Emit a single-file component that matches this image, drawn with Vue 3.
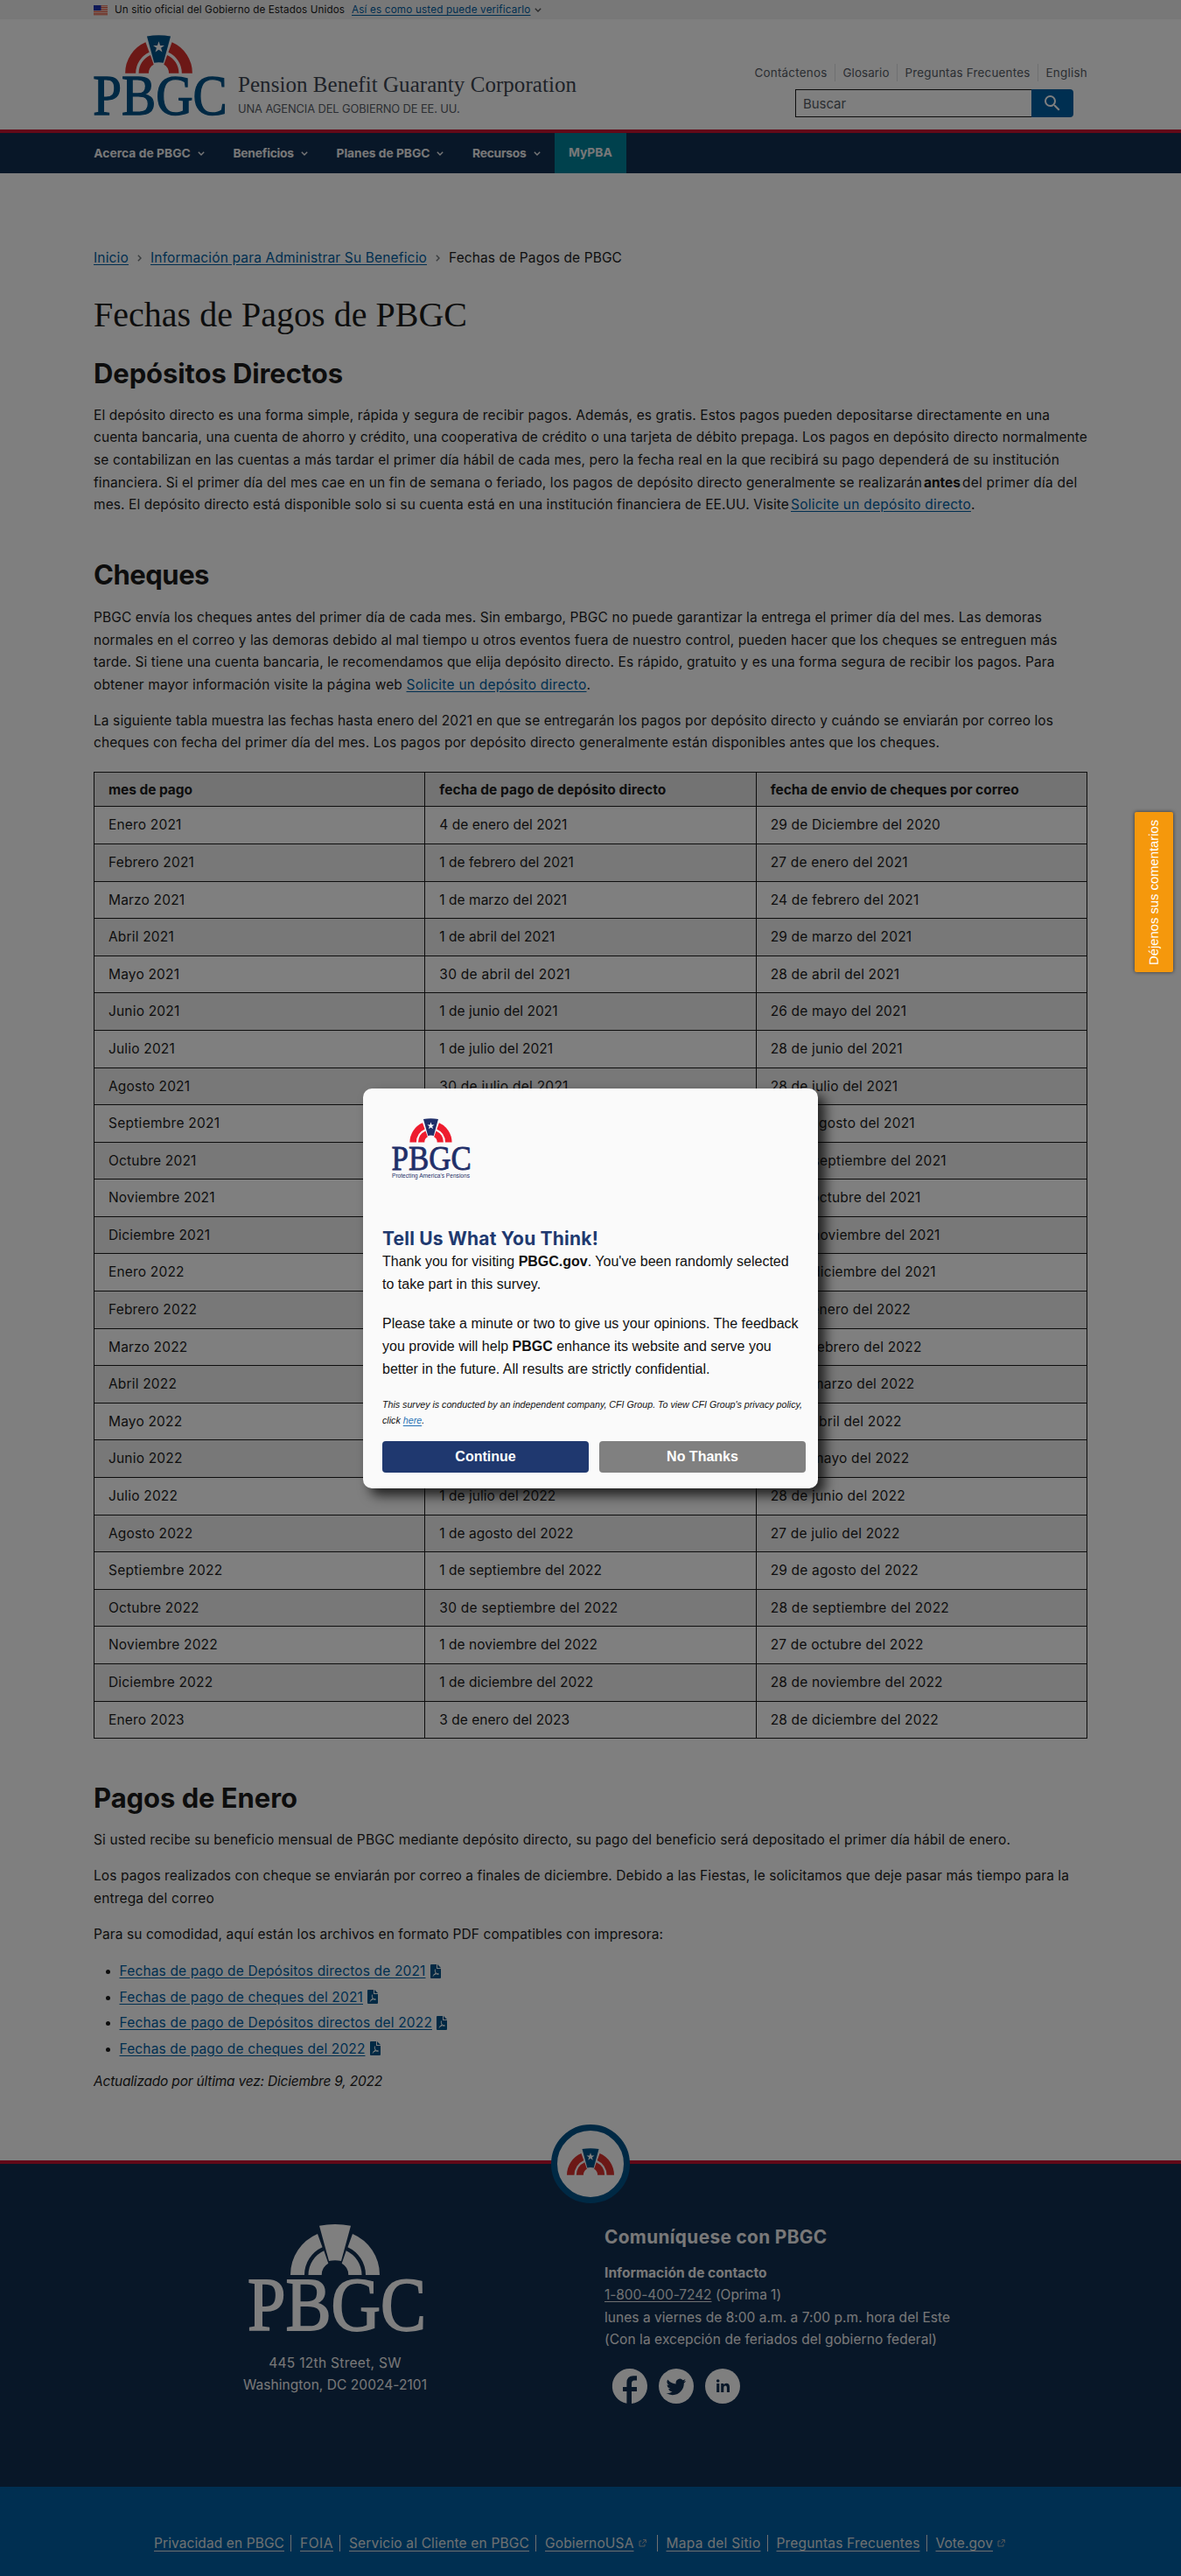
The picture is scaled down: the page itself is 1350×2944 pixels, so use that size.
<script setup>
// Tunes the tracking of a line of text so that it fills the given width.
const vFit = {
  mounted(el, { value }) {
    if (!value) return
    const natural = el.getBoundingClientRect().width
    const count = el.textContent.length
    el.style.letterSpacing = (value - natural) / count + 'px'
  }
}

const navItems = [
  ['Acerca de PBGC', 110.5],
  ['Beneficios', 69.5],
  ['Planes de PBGC', 107],
  ['Recursos', 61.5]
]

const topLinks = [
  ['Contáctenos', 83],
  ['Glosario', 53],
  ['Preguntas Frecuentes', 143],
  ['English', 47.5]
]

const rows = [
  ['Enero 2021', '4 de enero del 2021', '29 de Diciembre del 2020'],
  ['Febrero 2021', '1 de febrero del 2021', '27 de enero del 2021'],
  ['Marzo 2021', '1 de marzo del 2021', '24 de febrero del 2021'],
  ['Abril 2021', '1 de abril del 2021', '29 de marzo del 2021'],
  ['Mayo 2021', '30 de abril del 2021', '28 de abril del 2021'],
  ['Junio 2021', '1 de junio del 2021', '26 de mayo del 2021'],
  ['Julio 2021', '1 de julio del 2021', '28 de junio del 2021'],
  ['Agosto 2021', '30 de julio del 2021', '28 de julio del 2021'],
  ['Septiembre 2021', '1 de septiembre del 2021', '27 de agosto del 2021'],
  ['Octubre 2021', '1 de octubre del 2021', '28 de septiembre del 2021'],
  ['Noviembre 2021', '1 de noviembre del 2021', '27 de octubre del 2021'],
  ['Diciembre 2021', '1 de diciembre del 2021', '26 de noviembre del 2021'],
  ['Enero 2022', '3 de enero del 2022', '29 de diciembre del 2021'],
  ['Febrero 2022', '1 de febrero del 2022', '27 de enero del 2022'],
  ['Marzo 2022', '1 de marzo del 2022', '24 de febrero del 2022'],
  ['Abril 2022', '1 de abril del 2022', '29 de marzo del 2022'],
  ['Mayo 2022', '29 de abril del 2022', '27 de abril del 2022'],
  ['Junio 2022', '1 de junio del 2022', '26 de mayo del 2022'],
  ['Julio 2022', '1 de julio del 2022', '28 de junio del 2022'],
  ['Agosto 2022', '1 de agosto del 2022', '27 de julio del 2022'],
  ['Septiembre 2022', '1 de septiembre del 2022', '29 de agosto del 2022'],
  ['Octubre 2022', '30 de septiembre del 2022', '28 de septiembre del 2022'],
  ['Noviembre 2022', '1 de noviembre del 2022', '27 de octubre del 2022'],
  ['Diciembre 2022', '1 de diciembre del 2022', '28 de noviembre del 2022'],
  ['Enero 2023', '3 de enero del 2023', '28 de diciembre del 2022']
]

const isWide = (text) => /^(septiembre|30|28 de septiembre)/i.test(text)

const files = [
  ['Fechas de pago de Depósitos directos de 2021', 350],
  ['Fechas de pago de cheques del 2021', 278.5],
  ['Fechas de pago de Depósitos directos del 2022', 357.5],
  ['Fechas de pago de cheques del 2022', 281]
]

const legal = [
  ['Privacidad en PBGC', 149, false],
  ['FOIA', 38, false],
  ['Servicio al Cliente en PBGC', 206, false],
  ['GobiernoUSA', 101.5, true],
  ['Mapa del Sitio', 108, false],
  ['Preguntas Frecuentes', 164, false],
  ['Vote.gov', 65.5, true]
]
</script>

<template>
  <div class="page">
    <svg class="defs" width="0" height="0" aria-hidden="true">
      <symbol id="arch" viewBox="48 0 102 58">
        <g id="arch-shape">
          <g fill="var(--arch)">
            <path d="M48 58A51 51 0 0 1 79 11L84.5 26.2A35 35 0 0 0 64 58ZM68.5 58A30.5 30.5 0 0 1 86.3 30.3L91.3 44.8A15.3 15.3 0 0 0 83.7 58Z" />
            <path transform="translate(198 0) scale(-1 1)" d="M48 58A51 51 0 0 1 79 11L84.5 26.2A35 35 0 0 0 64 58ZM68.5 58A30.5 30.5 0 0 1 86.3 30.3L91.3 44.8A15.3 15.3 0 0 0 83.7 58Z" />
          </g>
          <path fill="var(--key)" d="M81 1.8Q99-1.6 117 1.8L106 42Q99 40.5 92 42Z" />
          <path fill="var(--star)" d="M99 9.5L101.1 15.7H107.6L102.4 19.6L104.3 25.9L99 22.1L93.7 25.9L95.6 19.6L90.4 15.7H96.9Z" />
        </g>
      </symbol>
      <symbol id="logo" viewBox="0 0 198 122" overflow="visible">
        <use href="#arch-shape" />
        <text x="-1" y="121" font-family="'Liberation Serif', serif" font-size="86" textLength="204" lengthAdjust="spacingAndGlyphs" fill="var(--word)" stroke="var(--word)" stroke-width="1.8">PBGC</text>
      </symbol>
      <symbol id="chevron" viewBox="0 0 8 5">
        <path d="M.8.8L4 4L7.2.8" fill="none" stroke="currentColor" stroke-width="1.4" />
      </symbol>
      <symbol id="pdf" viewBox="0 0 12 16">
        <path fill="currentColor" d="M0 1Q0 0 1 0H7V5H12V15Q12 16 11 16H1Q0 16 0 15ZM8 0L12 4H8Z" />
        <path fill="none" stroke="#fff" stroke-width="1" d="M5.4 5.6Q5 8 6 9.6Q7.2 11.6 9.6 11.2M6 9.6Q4.6 12.6 2.8 13.4M3.6 11.8Q6 10.4 9.4 10.8" />
      </symbol>
      <symbol id="external" viewBox="0 0 9 9">
        <path fill="none" stroke="currentColor" stroke-width="1" d="M3.5 2H1V8H7V5.5M5 .6H8.4V4M8.2.8L4.2 4.8" />
      </symbol>
    </svg>

    <div class="banner wrap">
      <svg class="flag" width="16" height="11" viewBox="0 0 16 11">
        <rect width="16" height="11" fill="#fff" />
        <path d="M0 .8H16M0 2.5H16M0 4.2H16M0 5.9H16M0 7.6H16M0 9.3H16M0 10.8H16" stroke="#db3e1f" stroke-width=".9" />
        <rect width="8.5" height="6" fill="#1e33b1" />
      </svg>
      <span v-fit="263">Un sitio oficial del Gobierno de Estados Unidos</span>
      <a v-fit="204.5" class="how">Así es como usted puede verificarlo</a>
      <svg class="how-arrow" width="8" height="5"><use href="#chevron" /></svg>
    </div>

    <header class="wrap head">
      <svg class="logo" width="149" height="92"><use href="#logo" /></svg>
      <div class="brand">
        <div class="brand-name"><span v-fit="387">Pension Benefit Guaranty Corporation</span></div>
        <div class="brand-sub"><span v-fit="253.5">UNA AGENCIA DEL GOBIERNO DE EE. UU.</span></div>
      </div>
      <div class="tools">
        <div class="top-links">
          <a v-for="l in topLinks" :key="l[0]"><span v-fit="l[1]">{{ l[0] }}</span></a>
        </div>
        <div class="search">
          <div class="field"><span v-fit="49">Buscar</span></div>
          <div class="go">
            <svg width="24" height="24" viewBox="0 0 24 24"><path fill="#fff" d="M15.5 14h-.79l-.28-.27A6.47 6.47 0 0 0 16 9.5 6.5 6.5 0 1 0 9.5 16c1.61 0 3.09-.59 4.23-1.57l.27.28v.79l5 4.99L20.49 19l-4.99-5zm-6 0C7.01 14 5 11.99 5 9.5S7.01 5 9.5 5 14 7.01 14 9.5 11.99 14 9.5 14z" /></svg>
          </div>
        </div>
      </div>
    </header>

    <nav class="nav">
      <div class="nav-row">
        <a v-for="n in navItems" :key="n[0]" class="nav-item">
          <span v-fit="n[1]">{{ n[0] }}</span>
          <svg width="8" height="5"><use href="#chevron" /></svg>
        </a>
        <a class="mypba"><span v-fit="50">MyPBA</span></a>
      </div>
    </nav>

    <main class="wrap main">
      <div class="crumbs">
        <a v-fit="40">Inicio</a>
        <svg width="5" height="8" viewBox="0 0 5 8"><path d="M.8.8L4 4L.8 7.2" fill="none" stroke="#71767a" stroke-width="1.4" /></svg>
        <a v-fit="316">Información para Administrar Su Beneficio</a>
        <svg width="5" height="8" viewBox="0 0 5 8"><path d="M.8.8L4 4L.8 7.2" fill="none" stroke="#71767a" stroke-width="1.4" /></svg>
        <span v-fit="198">Fechas de Pagos de PBGC</span>
      </div>

      <h1><span v-fit="427">Fechas de Pagos de PBGC</span></h1>

      <h2><span v-fit="285">Depósitos Directos</span></h2>
      <div class="para">
        <div><span v-fit="1093">El depósito directo es una forma simple, rápida y segura de recibir pagos. Además, es gratis. Estos pagos pueden depositarse directamente en una</span></div>
        <div><span v-fit="1136">cuenta bancaria, una cuenta de ahorro y crédito, una cooperativa de crédito o una tarjeta de débito prepaga. Los pagos en depósito directo normalmente</span></div>
        <div><span v-fit="1104">se contabilizan en las cuentas a más tardar el primer día hábil de cada mes, pero la fecha real en la que recibirá su pago dependerá de su institución</span></div>
        <div><span v-fit="947">financiera. Si el primer día del mes cae en un fin de semana o feriado, los pagos de depósito directo generalmente se realizarán</span><b v-fit="42" class="tight">antes</b><span v-fit="131.5" class="tight">del primer día del</span></div>
        <div><span v-fit="795">mes. El depósito directo está disponible solo si su cuenta está en una institución financiera de EE.UU. Visite</span><a v-fit="206" class="tight">Solicite un depósito directo</a>.</div>
      </div>

      <h2 class="cheques"><span v-fit="132">Cheques</span></h2>
      <div class="para after">
        <div><span v-fit="1084">PBGC envía los cheques antes del primer día de cada mes. Sin embargo, PBGC no puede garantizar la entrega el primer día del mes. Las demoras</span></div>
        <div><span v-fit="1101.5">normales en el correo y las demoras debido al mal tiempo u otros eventos fuera de nuestro control, pueden hacer que los cheques se entreguen más</span></div>
        <div><span v-fit="1098.5">tarde. Si tiene una cuenta bancaria, le recomendamos que elija depósito directo. Es rápido, gratuito y es una forma segura de recibir los pagos. Para</span></div>
        <div><span v-fit="353">obtener mayor información visite la página web</span><a v-fit="206" class="word">Solicite un depósito directo</a>.</div>
      </div>
      <div class="para next">
        <div><span v-fit="1097">La siguiente tabla muestra las fechas hasta enero del 2021 en que se entregarán los pagos por depósito directo y cuándo se enviarán por correo los</span></div>
        <div><span v-fit="967">cheques con fecha del primer día del mes. Los pagos por depósito directo generalmente están disponibles antes que los cheques.</span></div>
      </div>

      <table>
        <thead>
          <tr>
            <th><span v-fit="96">mes de pago</span></th>
            <th><span v-fit="259">fecha de pago de depósito directo</span></th>
            <th><span v-fit="284">fecha de envio de cheques por correo</span></th>
          </tr>
        </thead>
        <tbody>
          <tr v-for="r in rows" :key="r[0]">
            <td v-for="c in r" :key="c" :class="{ wide: isWide(c) }">{{ c }}</td>
          </tr>
        </tbody>
      </table>

      <h2 class="enero"><span v-fit="233">Pagos de Enero</span></h2>
      <div class="para after">
        <div><span v-fit="1048">Si usted recibe su beneficio mensual de PBGC mediante depósito directo, su pago del beneficio será depositado el primer día hábil de enero.</span></div>
      </div>
      <div class="para next">
        <div><span v-fit="1115">Los pagos realizados con cheque se enviarán por correo a finales de diciembre. Debido a las Fiestas, le solicitamos que deje pasar más tiempo para la</span></div>
        <div><span v-fit="138">entrega del correo</span></div>
      </div>
      <div class="para next">
        <div><span v-fit="651">Para su comodidad, aquí están los archivos en formato PDF compatibles con impresora:</span></div>
      </div>
      <ul>
        <li v-for="f in files" :key="f[0]">
          <a v-fit="f[1]">{{ f[0] }}</a>
          <svg width="12" height="16"><use href="#pdf" /></svg>
        </li>
      </ul>
      <div class="updated"><i v-fit="330">Actualizado por última vez: Diciembre 9, 2022</i></div>
    </main>

    <footer class="foot">
      <div class="medal"><svg width="54" height="31"><use href="#arch" /></svg></div>
      <div class="wrap foot-cols">
        <div class="address">
          <svg class="foot-logo" width="198" height="122"><use href="#logo" /></svg>
          <div><span v-fit="151.5">445 12th Street, SW</span></div>
          <div><span v-fit="210">Washington, DC 20024-2101</span></div>
        </div>
        <div class="contact">
          <h3><span v-fit="254.5">Comuníquese con PBGC</span></h3>
          <div><b v-fit="185.5">Información de contacto</b></div>
          <div><a v-fit="122.5">1-800-400-7242</a><span v-fit="75" class="word">(Oprima 1)</span></div>
          <div><span v-fit="395">lunes a viernes de 8:00 a.m. a 7:00 p.m. hora del Este</span></div>
          <div><span v-fit="380">(Con la excepción de feriados del gobierno federal)</span></div>
          <div class="social">
            <svg width="40" height="40" viewBox="0 0 40 40"><path fill="#fff" fill-rule="evenodd" d="M20 0a20 20 0 0 1 2 39.9V26H28V21H22V17Q22 13.4 25 13.4H28V8.2H24Q16.4 8.2 16.4 16V21H12V26H16.4V39.7A20 20 0 0 1 20 0Z" /></svg>
            <svg width="40" height="40" viewBox="0 0 40 40"><circle cx="20" cy="20" r="20" fill="#fff" /><path transform="translate(9 9.3) scale(.94)" fill="#112e51" d="M23.6 4.9a9.6 9.6 0 0 1-2.8.8 4.9 4.9 0 0 0 2.1-2.7c-1 .6-2 1-3.1 1.2a4.9 4.9 0 0 0-8.4 4.5A14 14 0 0 1 1.3 3.5a4.9 4.9 0 0 0 1.5 6.6 4.9 4.9 0 0 1-2.2-.6v.1a4.9 4.9 0 0 0 3.9 4.8 5 5 0 0 1-2.2.1 4.9 4.9 0 0 0 4.6 3.4A9.9 9.9 0 0 1-.4 20a14 14 0 0 0 7.5 2.2c9.1 0 14-7.5 14-14v-.6a10 10 0 0 0 2.5-2.7z" /></svg>
            <svg width="40" height="40" viewBox="0 0 40 40"><circle cx="20" cy="20" r="20" fill="#fff" /><path fill="#112e51" d="M13.2 17H16.3V27H13.2ZM14.7 12.2A1.8 1.8 0 1 1 14.7 15.8A1.8 1.8 0 1 1 14.7 12.2ZM18.2 17H21.2V18.4Q22.2 16.8 24.2 16.8Q28 16.8 28 21.2V27H24.9V21.8Q24.9 19.5 23.2 19.5Q21.3 19.5 21.3 21.8V27H18.2Z" /></svg>
          </div>
        </div>
      </div>
    </footer>

    <div class="legal">
      <span v-for="l in legal" :key="l[0]" class="legal-item" :class="{ ext: l[2] }">
        <a v-fit="l[1]">{{ l[0] }}</a>
        <svg v-if="l[2]" width="9" height="9"><use href="#external" /></svg>
      </span>
    </div>

    <div class="overlay">
      <div class="modal">
        <div class="survey-logo">
          <svg width="89" height="60" viewBox="0 0 198 133"><use href="#arch-shape" transform="translate(-5 0) scale(1.05)" /><text x="-1" y="131" font-family="'Liberation Serif', serif" font-size="90" textLength="203" lengthAdjust="spacingAndGlyphs" fill="#1f2f69" stroke="#1f2f69" stroke-width="1.8">PBGC</text></svg>
          <div class="tagline"><span v-fit="89">Protecting America's Pensions</span></div>
        </div>
        <div class="title"><span v-fit="247">Tell Us What You Think!</span></div>
        <div class="copy">
          <div>Thank you for visiting <b>PBGC.gov</b>. You've been randomly selected</div>
          <div>to take part in this survey.</div>
        </div>
        <div class="copy second">
          <div>Please take a minute or two to give us your opinions. The feedback</div>
          <div>you provide will help <b>PBGC</b> enhance its website and serve you</div>
          <div>better in the future. All results are strictly confidential.</div>
        </div>
        <div class="fine">
          <div><span v-fit="480">This survey is conducted by an independent company, CFI Group. To view CFI Group's privacy policy,</span></div>
          <div>click <a>here</a>.</div>
        </div>
        <div class="buttons">
          <div class="btn yes">Continue</div>
          <div class="btn no">No Thanks</div>
        </div>
      </div>
    </div>

    <div class="feedback">Déjenos sus comentarios</div>
  </div>
</template>

<style>
body {
  margin: 0;
  background: #fff;
}
</style>

<style scoped>
.page {
  position: relative;
  width: 1350px;
  height: 2944px;
  overflow: hidden;
  background: #fff;
  color: #1b1b1b;
  font: 15.5px/25.6px Inter, "Liberation Sans", sans-serif;
  white-space: nowrap;
  --arch: #d9302c;
  --key: #005288;
  --word: #005288;
  --star: #fff;
}
.defs { position: absolute; }
.page span, .page a, .page b, .page i { display: inline-block; }
svg { display: block; flex: none; overflow: visible; }
a { color: #005ea2; text-decoration: underline; text-underline-offset: 2px; }
.wrap { padding: 0 107px; }

.banner {
  display: flex;
  align-items: center;
  height: 22px;
  background: #f0f0f0;
  font-size: 11.7px;
  line-height: 22px;
}
.flag { margin-right: 8px; }
.banner .how { margin: 0 4px 0 8px; }
.how-arrow { color: #555; }

.head { display: flex; height: 126px; }
.logo { margin-top: 18px; }
.brand { margin: 60.5px 0 0 16px; color: #3d4551; }
.brand-name { font: 25px/28px "Liberation Serif", serif; }
.brand-sub { margin-top: 5px; font-size: 12.9px; line-height: 18px; color: #565c65; }
.tools { margin-left: auto; padding-top: 51px; }
.top-links { display: flex; justify-content: flex-end; font-size: 13.4px; line-height: 20px; }
.top-links a { color: #565c65; text-decoration: none; }
.top-links a + a { margin-left: 8px; padding-left: 9px; border-left: 1px solid #dfe1e2; }
.search { display: flex; width: 318px; height: 32px; margin: 9px 16px 0 auto; }
.field {
  flex: 1;
  box-sizing: border-box;
  padding-left: 8px;
  border: 1px solid #1b1b1b;
  border-right: 0;
  line-height: 32px;
  font-size: 15px;
  color: #565c65;
}
.go {
  display: flex;
  align-items: center;
  justify-content: center;
  width: 48px;
  border-radius: 0 4px 4px 0;
  background: #005ea2;
}

.nav { height: 46px; border-top: 4px solid #c41230; background: #112e51; }
.nav-row { display: flex; height: 46px; padding-left: 91px; font-size: 13.8px; font-weight: 700; line-height: 45px; }
.nav-row a { color: #f0f0f0; text-decoration: none; }
.nav-item, .page .nav-item { display: flex; align-items: center; padding: 0 16.3px; }
.nav-item svg { margin-left: 8px; }
.mypba { padding: 0 16px; background: #00829b; }

.main { height: 2270.5px; }
.crumbs { display: flex; align-items: center; padding-top: 84px; }
.crumbs svg { margin: 0 10px; }
h1 { margin: 28.4px 0 0; font: 40px/48px "Liberation Serif", serif; }
h2 { margin: 23.4px 0 0; font-size: 31px; line-height: 40px; font-weight: 700; }
h2.cheques { margin-top: 47.6px; }
h2.enero { margin-top: 47.3px; }
.para { margin-top: 14.4px; }
.para > div { height: 25.6px; }
.para.after { margin-top: 15.6px; }
.para.next { margin-top: 15.6px; }
.tight { margin-left: 2px; }
.word { margin-left: 4.5px; }

table {
  width: 1136px;
  margin-top: 19.7px;
  border-collapse: collapse;
  table-layout: fixed;
}
th, td { padding: 8px 16px; border: 1px solid #1b1b1b; text-align: left; }
th { padding: 7px 16px 6px; background: #e6e6e6; font-weight: 700; }
td { letter-spacing: 0.18px; }
td:nth-child(2) { letter-spacing: 0.03px; }
td.wide { letter-spacing: 0.27px; }
td.wide:nth-child(2) { letter-spacing: 0.25px; }
tbody tr:nth-child(even) { background: #f0f0f0; }

ul { margin: 14.6px 0 0; padding: 0; list-style: none; }
li { display: flex; align-items: center; height: 29.6px; }
li::before { content: ""; width: 5px; height: 5px; margin: 1px 11px 0 13.5px; border-radius: 50%; background: #1b1b1b; }
li svg { margin: 0 0 1px 5px; color: #005288; }
.updated { margin-top: 9.5px; }

.foot {
  position: relative;
  height: 369.5px;
  border-top: 4px solid #c41230;
  background: #112e51;
  color: #f0f0f0;
  --arch: #fff;
  --key: #fff;
  --star: #fff;
  --word: #fff;
}
.foot a { color: #dfe1e2; }
.medal {
  position: absolute;
  left: 630px;
  top: -45px;
  display: flex;
  justify-content: center;
  box-sizing: border-box;
  width: 90px;
  height: 90px;
  padding-top: 20px;
  border: 7px solid #005288;
  border-radius: 50%;
  background: #fff;
  --arch: #d9302c;
  --key: #005288;
}
.foot-cols { display: flex; gap: 32px; }
.address { width: 552px; padding-top: 69.5px; text-align: center; }
.foot-logo { margin: 0 auto 23.5px; }
.contact { padding-top: 69px; }
h3 { margin: 0 0 13px; font-size: 20.8px; line-height: 30px; }
.social { display: flex; gap: 13px; margin: 20.5px 0 0 9px; }

.legal {
  display: flex;
  height: 50px;
  padding: 52px 0 0 176px;
  background: #005ea2;
}
.legal a { color: #dfe1e2; text-underline-offset: 3px; }
.page .legal-item { display: flex; align-items: center; height: 25.6px; margin-right: 11px; padding-right: 7px; color: #a9aeb1; }
.legal-item::after { content: ""; width: 1px; height: 19px; margin-left: 7px; margin-right: -8px; background: #dfe1e2; }
.legal-item svg { margin-left: 5px; }
.page .legal-item.ext { padding-right: 12px; }
.legal-item.ext::after { margin-left: 12px; margin-right: -13px; }
.legal-item:last-child::after { display: none; }

.overlay {
  position: absolute;
  inset: 0;
  display: flex;
  align-items: center;
  justify-content: center;
  background: rgba(0, 0, 0, 0.5);
}
.modal {
  box-sizing: border-box;
  width: 520px;
  height: 457px;
  padding: 34px 14px 0 22px;
  border-radius: 10px;
  background: #fafafa;
  box-shadow: 8px 8px 14px rgba(0, 0, 0, 0.75);
  color: #111;
  font: 16px/25.8px "Liberation Sans", Arial, sans-serif;
  --arch: #ee1c2e;
  --key: #1f2f69;
}
.survey-logo { height: 119px; padding-left: 11px; }
.tagline { color: #1f2f69; font-size: 6.6px; line-height: 12px; }
.title { color: #20396f; font: 700 21px/30px Inter, sans-serif; height: 31px; margin-top: 4px; }
.copy { margin-top: -2.5px; }
.copy.second { margin-top: 19.5px; }
.fine { margin-top: 20px; font-size: 10.7px; line-height: 17.2px; font-style: italic; }
.fine a { color: #2672b5; }
.buttons { display: flex; gap: 12px; margin-top: 15px; }
.btn { width: 236px; height: 36px; border-radius: 4px; color: #fff; font-weight: 700; line-height: 35px; text-align: center; }
.yes { background: #1f386f; }
.no { background: #808080; }

.feedback {
  position: absolute;
  left: 1297px;
  top: 928px;
  display: flex;
  align-items: center;
  justify-content: center;
  box-sizing: border-box;
  width: 44px;
  height: 183px;
  border-radius: 2px;
  background: #f5980c;
  box-shadow: 0 0 4px rgba(0, 0, 0, 0.6);
  color: #fff;
  font: 14.8px/44px "Liberation Sans", Arial, sans-serif;
  writing-mode: vertical-rl;
  transform: rotate(180deg);
}
</style>
